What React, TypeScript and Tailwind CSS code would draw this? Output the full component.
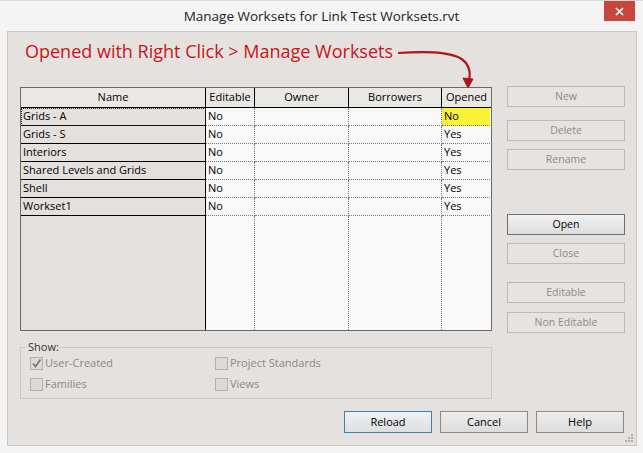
import React from 'react'

const rows = [
  { name: 'Grids - A', editable: 'No', opened: 'No' },
  { name: 'Grids - S', editable: 'No', opened: 'Yes' },
  { name: 'Interiors', editable: 'No', opened: 'Yes' },
  { name: 'Shared Levels and Grids', editable: 'No', opened: 'Yes' },
  { name: 'Shell', editable: 'No', opened: 'Yes' },
  { name: 'Workset1', editable: 'No', opened: 'Yes' },
]

const font = { fontFamily: '"Open Sans", "Liberation Sans", sans-serif' }

function SideButton({ label, enabled }: { label: string; enabled?: boolean }) {
  return (
    <button
      className={
        'h-[21px] w-[118px] border text-[10.5px] leading-none ' +
        (enabled
          ? 'border-[#707070] bg-gradient-to-b from-[#f2f2f2] to-[#dcdcdc] text-black'
          : 'border-[#bdbab7] bg-[#e6e3e0] text-[#8d8b89]')
      }
    >
      {label}
    </button>
  )
}

function Check({ label, checked }: { label: string; checked?: boolean }) {
  return (
    <div className="flex h-[21px] items-center gap-[2px] text-[11px] text-[#8a8886]">
      <span className="flex h-[13px] w-[13px] items-center justify-center border border-[#b3b0ad] bg-[#dcd9d6]">
        {checked && (
          <svg width="11" height="11" viewBox="0 0 11 11">
            <path d="M2 5.5 L4.5 8.5 L9.5 1.5" fill="none" stroke="#7a7876" strokeWidth="1.8" />
          </svg>
        )}
      </span>
      <span>{label}</span>
    </div>
  )
}

export default function App() {
  return (
    <div className="h-[453px] w-[643px] overflow-hidden bg-[#f4f4f4] text-black" style={font}>
      {/* title bar */}
      <div className="relative flex h-[31px] items-center justify-center border-t border-[#dadada]">
        <span className="text-[13.5px] text-[#222]">Manage Worksets for Link Test Worksets.rvt</span>
        <div className="absolute right-[8px] top-0 flex h-[20px] w-[31px] items-center justify-center bg-[#c9463d]">
          <svg width="9" height="9" viewBox="0 0 9 9">
            <path d="M1 1 L8 8 M8 1 L1 8" stroke="#fff" strokeWidth="1.6" />
          </svg>
        </div>
      </div>

      {/* client area */}
      <div className="ml-[7px] flex h-[415px] w-[630px] flex-col border border-[#c9c9c9] bg-[#e4e1de] px-[12px]">
        {/* annotation */}
        <div className="relative h-[55px]">
          <span className="absolute left-[5px] top-[6px] text-[18px] text-[#c4161c]">
            Opened with Right Click &gt; Manage Worksets
          </span>
          <svg className="absolute left-0 top-0" width="500" height="56" viewBox="0 0 500 56">
            <path d="M378 21 C412 19 438 20 446 31 C451 38 450 46 448 51" fill="none" stroke="#b0141c" strokeWidth="2.2" />
            <path d="M443 46 L448 56 L453 47 Z" fill="#b0141c" stroke="#b0141c" strokeWidth="1" />
          </svg>
        </div>

        <div className="flex gap-[15px]">
          {/* table */}
          <div className="flex h-[244px] w-[472px] flex-col border border-[#6a6a6a] bg-[#f8f8f8] text-[11px]">
            <div className="flex h-[20px] border-b border-black bg-[#eae8e5]">
              <div className="flex w-[185px] items-center justify-center border-r border-black">Name</div>
              <div className="flex w-[49px] items-center justify-center border-r border-black">Editable</div>
              <div className="flex w-[94px] items-center justify-center border-r border-black">Owner</div>
              <div className="flex w-[93px] items-center justify-center border-r border-black">Borrowers</div>
              <div className="flex w-[49px] items-center justify-center">Opened</div>
            </div>
            {rows.map((r, i) => (
              <div key={r.name} className="flex h-[18px]">
                <div
                  className={
                    'flex w-[185px] items-center border-b border-r border-black bg-[#e3e0dd] pl-[2px] ' +
                    (i === 0 ? 'outline-1 outline-dotted outline-offset-[-1px] outline-[#222]' : '')
                  }
                >
                  {r.name}
                </div>
                <div className="flex w-[49px] items-center border-b border-r border-dotted border-[#777] pl-[2px]">
                  {r.editable}
                </div>
                <div className="w-[94px] border-b border-r border-dotted border-[#777]" />
                <div className="w-[93px] border-b border-r border-dotted border-[#777]" />
                <div
                  className={
                    'flex w-[48px] items-center border-b border-dotted border-[#777] pl-[2px] ' +
                    (i === 0 ? 'bg-[#f6f336]' : '')
                  }
                >
                  {r.opened}
                </div>
              </div>
            ))}
            <div className="flex flex-1">
              <div className="w-[185px] border-r border-black bg-[#e3e0dd]" />
              <div className="w-[49px] border-r border-dotted border-[#777]" />
              <div className="w-[94px] border-r border-dotted border-[#777]" />
              <div className="w-[93px] border-r border-dotted border-[#777]" />
              <div className="w-[48px]" />
            </div>
          </div>

          {/* side buttons */}
          <div className="-mt-px flex h-[248px] flex-col">
            <SideButton label="New" />
            <div className="h-[13px]" />
            <SideButton label="Delete" />
            <div className="h-[8px]" />
            <SideButton label="Rename" />
            <div className="h-[44px]" />
            <SideButton label="Open" enabled />
            <div className="h-[8px]" />
            <SideButton label="Close" />
            <div className="h-[18px]" />
            <SideButton label="Editable" />
            <div className="h-[9px]" />
            <SideButton label="Non Editable" />
          </div>
        </div>

        {/* show group */}
        <div className="relative mt-[13px] h-[52px] w-[472px] border border-[#cbc8c5] px-[9px] pt-[5px]">
          <span className="absolute left-[6px] top-[-9px] bg-[#e4e1de] px-[1px] text-[11px] text-[#333]">Show:</span>
          <div className="grid grid-cols-[185px_1fr]">
            <Check label="User-Created" checked />
            <Check label="Project Standards" />
            <Check label="Families" />
            <Check label="Views" />
          </div>
        </div>

        {/* bottom buttons */}
        <div className="relative mt-[12px] flex justify-end gap-[8px]">
          <button className="h-[22px] w-[88px] border border-[#3c7fb1] bg-gradient-to-b from-[#eef2f5] to-[#dcdedf] text-[11px]">
            Reload
          </button>
          <button className="h-[22px] w-[88px] border border-[#8a8a8a] bg-gradient-to-b from-[#eeeeee] to-[#dcdcdc] text-[11px]">
            Cancel
          </button>
          <button className="h-[22px] w-[88px] border border-[#8a8a8a] bg-gradient-to-b from-[#eeeeee] to-[#dcdcdc] text-[11px]">
            Help
          </button>
        </div>
        <div className="relative flex-1">
          <svg className="absolute bottom-[2px] right-[-10px]" width="10" height="10" viewBox="0 0 10 10">
            <g fill="#b0aeab">
              <rect x="7" y="1" width="2" height="2" />
              <rect x="4" y="4" width="2" height="2" />
              <rect x="7" y="4" width="2" height="2" />
              <rect x="1" y="7" width="2" height="2" />
              <rect x="4" y="7" width="2" height="2" />
              <rect x="7" y="7" width="2" height="2" />
            </g>
          </svg>
        </div>
      </div>
    </div>
  )
}
